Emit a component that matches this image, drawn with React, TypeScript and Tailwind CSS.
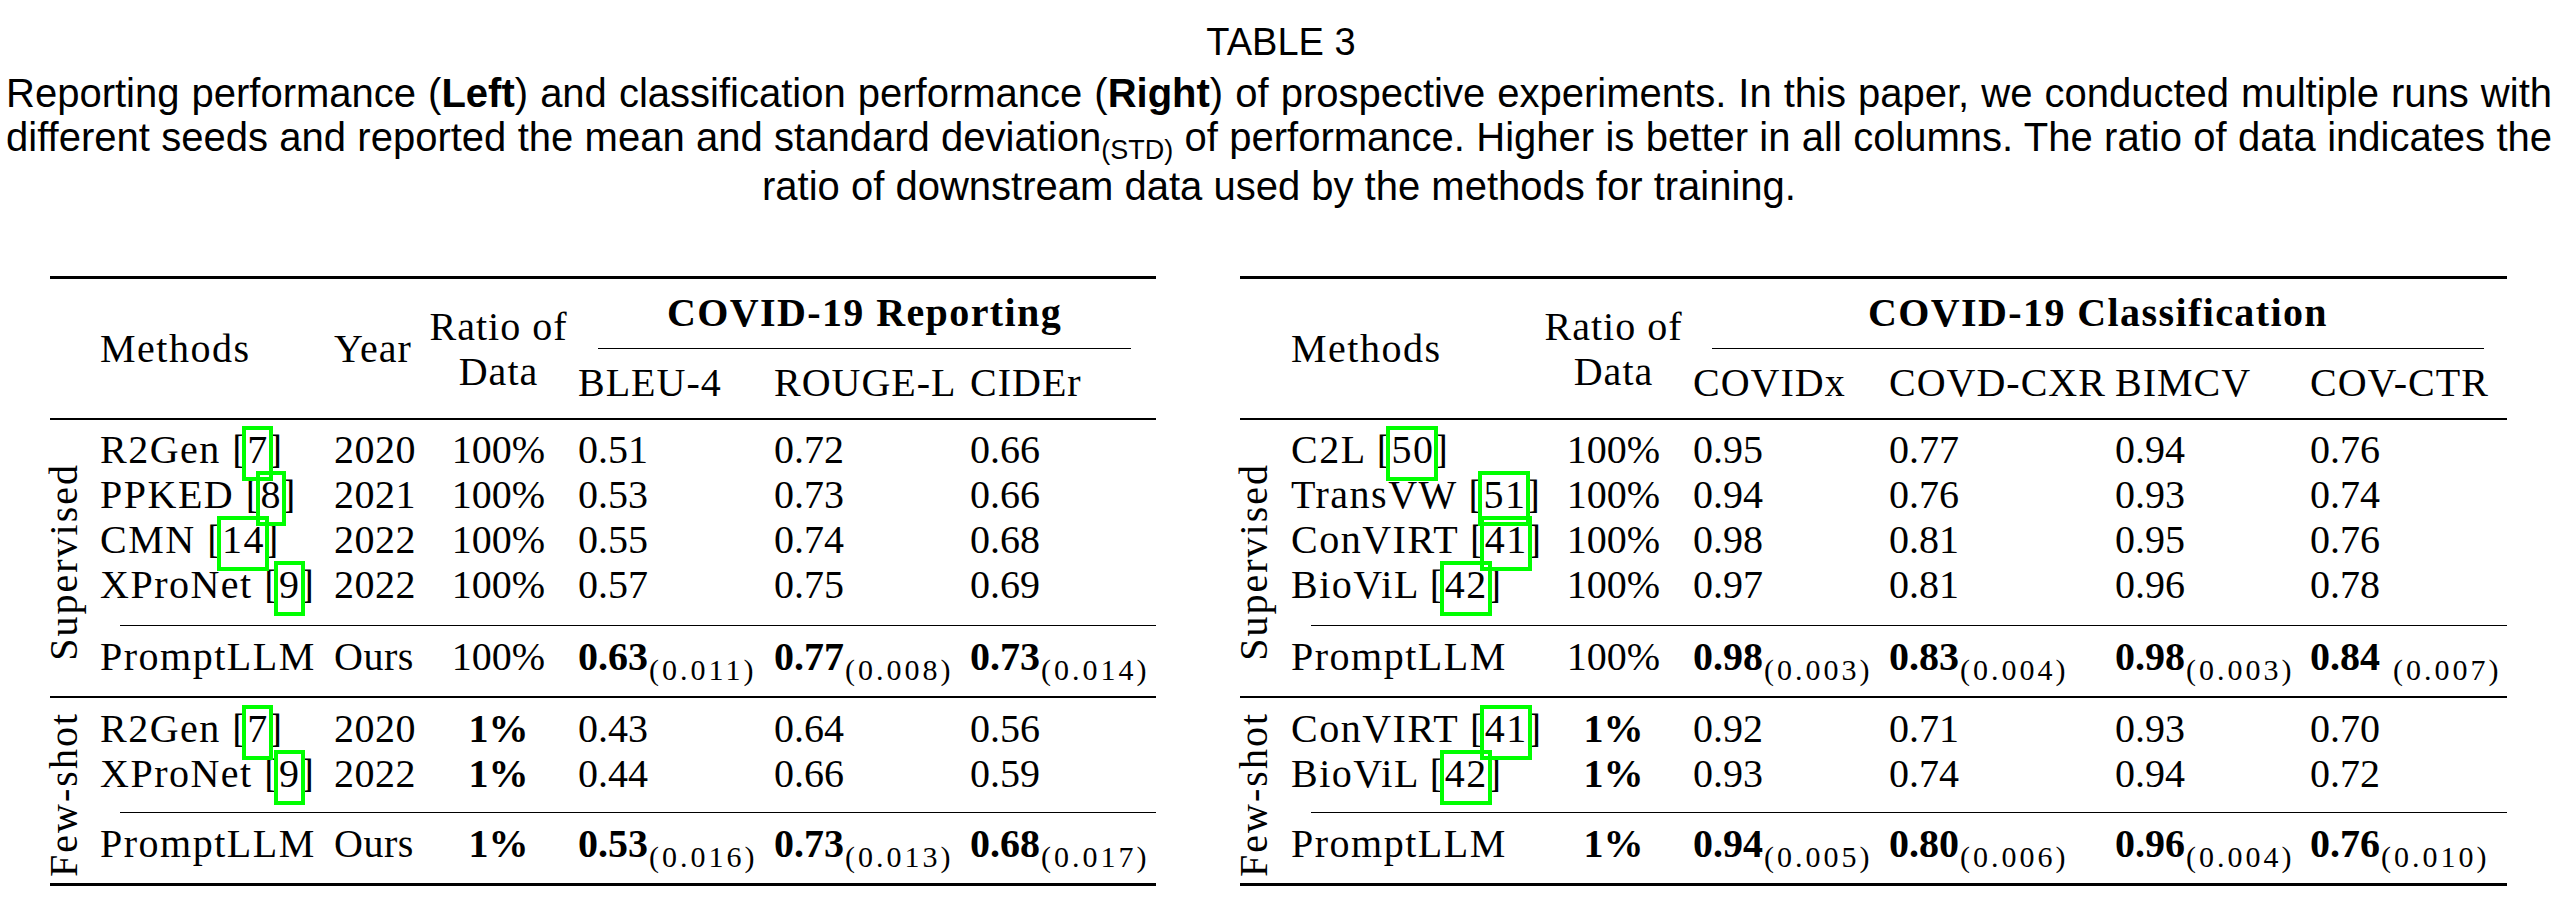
import React from "react";

type Val = { v: string; sd?: string; b?: boolean; gap?: boolean };
type Row = { m: string; cite?: string; year?: string; ratio: string; rb?: boolean; vals: Val[] };
type Group = { label: string; pt: string; gap: string; rows: Row[]; last: Row };
type Spec = {
  width: string;
  labelW: string;
  methodsW: string;
  yearW?: string;
  ratioW: string;
  valW: string[];
  title: string;
  titleMargin: string;
  subs: string[];
  groups: Group[];
};

function Cite({ n }: { n: string }) {
  return (
    <>
      {" ["}
      <span className="relative">
        {n}
        <span className="pointer-events-none absolute -top-[1px] -right-[4px] -bottom-[9px] -left-[5px] border-[4px] border-[#00ff00]" />
      </span>
      {"]"}
    </>
  );
}

function GroupLabel({ text, w }: { text: string; w: string }) {
  return (
    <div className={`${w} flex shrink-0 items-center`}>
      <span className="-ml-[6px] translate-y-[4px] rotate-180 whitespace-nowrap text-[40px] leading-[40px] tracking-[2px] [writing-mode:vertical-rl]">
        {text}
      </span>
    </div>
  );
}

function Cell({ d, w }: { d: Val; w: string }) {
  return (
    <div className={`${w} whitespace-nowrap`}>
      <span className={d.b ? "font-bold" : ""}>{d.v}</span>
      {d.sd && (
        <span
          className={`align-[-10px] text-[30px] leading-none tracking-[3px] ${d.gap ? "ml-[13px]" : "ml-[1px]"}`}
        >
          ({d.sd})
        </span>
      )}
    </div>
  );
}

function DataRow({ r, spec }: { r: Row; spec: Spec }) {
  return (
    <div className="flex h-[45px] leading-[45px] whitespace-nowrap">
      <div className={`${spec.methodsW} tracking-[1.5px]`}>
        {r.m}
        {r.cite && <Cite n={r.cite} />}
      </div>
      {spec.yearW && <div className={`${spec.yearW} tracking-[0.5px]`}>{r.year}</div>}
      <div className={`${spec.ratioW} text-center ${r.rb ? "font-bold" : ""}`}>{r.ratio}</div>
      {r.vals.map((v, i) => (
        <Cell key={i} d={v} w={spec.valW[i]} />
      ))}
    </div>
  );
}

function Table({ spec }: { spec: Spec }) {
  return (
    <div className={`${spec.width} flex shrink-0 flex-col font-['Liberation_Serif','Times_New_Roman',serif] text-[40px] text-black`}>
      <div className="h-[3px] bg-black" />
      <div className="flex h-[139px] leading-[45px]">
        <div className={spec.labelW} />
        <div className={`${spec.methodsW} flex items-center tracking-[1.5px]`}>Methods</div>
        {spec.yearW && <div className={`${spec.yearW} flex items-center tracking-[1px]`}>Year</div>}
        <div className={`${spec.ratioW} flex flex-col items-center justify-center tracking-[1px]`}>
          <div>Ratio of</div>
          <div>Data</div>
        </div>
        <div className="flex min-w-0 flex-1 flex-col pt-[11px]">
          <div className={`${spec.titleMargin} h-[45px] text-center font-bold tracking-[1.4px] whitespace-nowrap`}>
            {spec.title}
          </div>
          <div className={`${spec.titleMargin} mt-[13px] h-[1px] bg-black`} />
          <div className="mt-[11px] flex h-[45px]">
            {spec.subs.map((s, i) => (
              <div key={i} className={`${spec.valW[i]} whitespace-nowrap tracking-[1px]`}>
                {s}
              </div>
            ))}
          </div>
        </div>
      </div>
      <div className="h-[2px] bg-black" />
      {spec.groups.map((g, gi) => (
        <React.Fragment key={gi}>
          {gi > 0 && <div className="h-[2px] bg-black" />}
          <div className="flex">
            <GroupLabel text={g.label} w={spec.labelW} />
            <div className={`flex min-w-0 flex-1 flex-col ${g.pt}`}>
              {g.rows.map((r, ri) => (
                <DataRow key={ri} r={r} spec={spec} />
              ))}
              <div className={`${g.gap} ml-[20px] h-[1px] bg-black`} />
              <div className="mt-[8px]">
                <DataRow r={g.last} spec={spec} />
              </div>
              <div className="h-[17px]" />
            </div>
          </div>
        </React.Fragment>
      ))}
      <div className="h-[3px] bg-black" />
    </div>
  );
}

const v = (s: string): Val => ({ v: s });

const leftSpec: Spec = {
  width: "w-[1106px]",
  labelW: "w-[50px]",
  methodsW: "w-[234px] shrink-0",
  yearW: "w-[92px] shrink-0",
  ratioW: "w-[145px] shrink-0",
  valW: ["w-[203px] shrink-0 pl-[7px]", "w-[196px] shrink-0", "w-[186px] shrink-0"],
  title: "COVID-19 Reporting",
  titleMargin: "ml-[27px] mr-[25px]",
  subs: ["BLEU-4", "ROUGE-L", "CIDEr"],
  groups: [
    {
      label: "Supervised",
      pt: "pt-[7px]",
      gap: "mt-[18px]",
      rows: [
        { m: "R2Gen", cite: "7", year: "2020", ratio: "100%", vals: [v("0.51"), v("0.72"), v("0.66")] },
        { m: "PPKED", cite: "8", year: "2021", ratio: "100%", vals: [v("0.53"), v("0.73"), v("0.66")] },
        { m: "CMN", cite: "14", year: "2022", ratio: "100%", vals: [v("0.55"), v("0.74"), v("0.68")] },
        { m: "XProNet", cite: "9", year: "2022", ratio: "100%", vals: [v("0.57"), v("0.75"), v("0.69")] },
      ],
      last: {
        m: "PromptLLM",
        year: "Ours",
        ratio: "100%",
        vals: [
          { v: "0.63", sd: "0.011", b: true },
          { v: "0.77", sd: "0.008", b: true },
          { v: "0.73", sd: "0.014", b: true },
        ],
      },
    },
    {
      label: "Few-shot",
      pt: "pt-[8px]",
      gap: "mt-[16px]",
      rows: [
        { m: "R2Gen", cite: "7", year: "2020", ratio: "1%", rb: true, vals: [v("0.43"), v("0.64"), v("0.56")] },
        { m: "XProNet", cite: "9", year: "2022", ratio: "1%", rb: true, vals: [v("0.44"), v("0.66"), v("0.59")] },
      ],
      last: {
        m: "PromptLLM",
        year: "Ours",
        ratio: "1%",
        rb: true,
        vals: [
          { v: "0.53", sd: "0.016", b: true },
          { v: "0.73", sd: "0.013", b: true },
          { v: "0.68", sd: "0.017", b: true },
        ],
      },
    },
  ],
};

const rightSpec: Spec = {
  width: "w-[1267px]",
  labelW: "w-[51px]",
  methodsW: "w-[248px] shrink-0",
  ratioW: "w-[149px] shrink-0",
  valW: ["w-[201px] shrink-0 pl-[5px]", "w-[226px] shrink-0", "w-[195px] shrink-0", "w-[197px] shrink-0"],
  title: "COVID-19 Classification",
  titleMargin: "ml-[24px] mr-[23px]",
  subs: ["COVIDx", "COVD-CXR", "BIMCV", "COV-CTR"],
  groups: [
    {
      label: "Supervised",
      pt: "pt-[7px]",
      gap: "mt-[18px]",
      rows: [
        { m: "C2L", cite: "50", ratio: "100%", vals: [v("0.95"), v("0.77"), v("0.94"), v("0.76")] },
        { m: "TransVW", cite: "51", ratio: "100%", vals: [v("0.94"), v("0.76"), v("0.93"), v("0.74")] },
        { m: "ConVIRT", cite: "41", ratio: "100%", vals: [v("0.98"), v("0.81"), v("0.95"), v("0.76")] },
        { m: "BioViL", cite: "42", ratio: "100%", vals: [v("0.97"), v("0.81"), v("0.96"), v("0.78")] },
      ],
      last: {
        m: "PromptLLM",
        ratio: "100%",
        vals: [
          { v: "0.98", sd: "0.003", b: true },
          { v: "0.83", sd: "0.004", b: true },
          { v: "0.98", sd: "0.003", b: true },
          { v: "0.84", sd: "0.007", b: true, gap: true },
        ],
      },
    },
    {
      label: "Few-shot",
      pt: "pt-[8px]",
      gap: "mt-[16px]",
      rows: [
        { m: "ConVIRT", cite: "41", ratio: "1%", rb: true, vals: [v("0.92"), v("0.71"), v("0.93"), v("0.70")] },
        { m: "BioViL", cite: "42", ratio: "1%", rb: true, vals: [v("0.93"), v("0.74"), v("0.94"), v("0.72")] },
      ],
      last: {
        m: "PromptLLM",
        ratio: "1%",
        rb: true,
        vals: [
          { v: "0.94", sd: "0.005", b: true },
          { v: "0.80", sd: "0.006", b: true },
          { v: "0.96", sd: "0.004", b: true },
          { v: "0.76", sd: "0.010", b: true },
        ],
      },
    },
  ],
};

export default function App() {
  return (
    <div className="h-[907px] w-[2562px] overflow-hidden bg-white text-black">
      <div className="pt-[20px] font-['Liberation_Sans',Arial,sans-serif]">
        <div className="text-center text-[38px] leading-[44px]">TABLE 3</div>
        <div className="mt-[7px] pr-[10px] pl-[6px] text-[40px] leading-[44px]">
          <div className="text-justify [text-align-last:justify]">
            Reporting performance (<b>Left</b>) and classification performance (<b>Right</b>) of prospective
            experiments. In this paper, we conducted multiple runs with
          </div>
          <div className="text-justify [text-align-last:justify]">
            different seeds and reported the mean and standard deviation
            <span className="align-[-8px] text-[27px] leading-none">(STD)</span> of performance. Higher is better in all
            columns. The ratio of data indicates the
          </div>
          <div className="text-center">ratio of downstream data used by the methods for training.</div>
        </div>
      </div>
      <div className="mt-[68px] flex gap-[84px] pl-[50px]">
        <Table spec={leftSpec} />
        <Table spec={rightSpec} />
      </div>
    </div>
  );
}
